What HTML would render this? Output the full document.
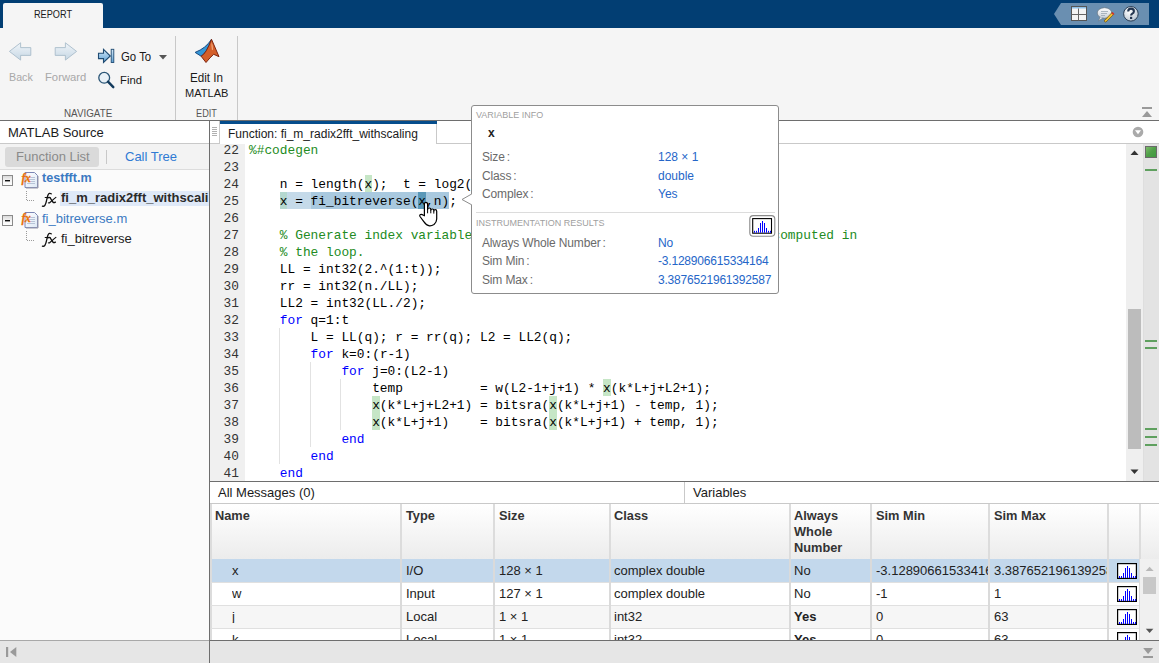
<!DOCTYPE html><html><head><meta charset="utf-8"><style>
*{margin:0;padding:0;box-sizing:border-box}
html,body{width:1159px;height:663px;overflow:hidden;background:#f5f5f5;font-family:"Liberation Sans",sans-serif;color:#222}
.a{position:absolute}
.t{position:absolute;white-space:pre;line-height:1}
.code{position:absolute;font-family:"Liberation Mono",monospace;font-size:12.83px;line-height:17px;white-space:pre;color:#000}
.cm{color:#228b22}
.kw{color:#0000ff}
.ln{position:absolute;font-family:"Liberation Mono",monospace;font-size:12.83px;line-height:17px;white-space:pre;color:#333;text-align:right;width:29px}
</style></head><body>
<div class="a" style="left:0;top:0;width:1159px;height:28px;background:#023e73"></div>
<div class="a" style="left:3px;top:3px;width:100px;height:25px;background:#f5f5f5;border-radius:2px 2px 0 0"></div>
<div class="t" style="left:34px;top:8.7px;font-size:11px;color:#1a1a1a;transform:scaleX(0.833);transform-origin:0 0">REPORT</div>
<svg class="a" style="left:1054px;top:3px" width="95" height="22"><path d="M0 11 L7 0 H95 V22 H7 Z" fill="#6a8fb1"/></svg>
<div class="a" style="left:0;top:120px;width:1159px;height:1px;background:#6e6e6e"></div>
<div class="a" style="left:175px;top:36px;width:1px;height:84px;background:#c8c8c8"></div>
<div class="a" style="left:237px;top:36px;width:1px;height:84px;background:#c8c8c8"></div>
<div class="t" style="left:8.5px;top:72.2px;font-size:11.25px;color:#a8a8a8;transform:scaleX(0.95);transform-origin:0 0">Back</div>
<div class="t" style="left:45px;top:72.2px;font-size:11.25px;color:#a8a8a8;transform:scaleX(1.0);transform-origin:0 0">Forward</div>
<div class="t" style="left:121px;top:50.6px;font-size:12.3px;color:#1a1a1a;transform:scaleX(0.926);transform-origin:0 0">Go To</div>
<div class="t" style="left:120px;top:75px;font-size:11.5px;color:#1a1a1a;transform:scaleX(0.98);transform-origin:0 0">Find</div>
<div class="t" style="left:64px;top:107.9px;font-size:10.7px;color:#555;transform:scaleX(0.92);transform-origin:0 0">NAVIGATE</div>
<div class="t" style="left:190.4px;top:71.8px;font-size:12px;color:#1a1a1a;transform:scaleX(0.97);transform-origin:0 0">Edit In</div>
<div class="t" style="left:185px;top:88px;font-size:11.8px;color:#1a1a1a;transform:scaleX(0.937);transform-origin:0 0">MATLAB</div>
<div class="t" style="left:196px;top:107.9px;font-size:10.7px;color:#555;transform:scaleX(0.86);transform-origin:0 0">EDIT</div>
<svg class="a" style="left:0;top:28px" width="240" height="92" viewBox="0 28 240 92">
<defs>
<linearGradient id="ga" x1="0" y1="0" x2="0" y2="1"><stop offset="0" stop-color="#f0f5f9"/><stop offset="1" stop-color="#c6d7e4"/></linearGradient>
<linearGradient id="gb" x1="0" y1="0" x2="0" y2="1"><stop offset="0" stop-color="#d6ebfa"/><stop offset="1" stop-color="#5d9fd3"/></linearGradient>
</defs>
<path d="M9.4 51.4 L20.6 42.8 V47.6 H30.8 V55.4 H20.6 V60.1 Z" fill="url(#ga)" stroke="#a9bccb" stroke-width="0.9"/>
<path d="M76.6 51.4 L65.4 42.8 V47.6 H55.2 V55.4 H65.4 V60.1 Z" fill="url(#ga)" stroke="#a9bccb" stroke-width="0.9"/>
<path d="M98.5 53.2 H103.5 V49.3 L110.3 56 L103.5 62.5 V58.6 H98.5 Z" fill="url(#gb)" stroke="#1f4b72" stroke-width="1.1" stroke-linejoin="miter"/>
<rect x="111.2" y="49.3" width="2.6" height="13.2" fill="url(#gb)" stroke="#1f4b72" stroke-width="0.9"/>
<path d="M159 55 H167 L163 59.5 Z" fill="#555"/>
<circle cx="104.2" cy="77.8" r="5.4" fill="#e9f1f7" stroke="#2a5576" stroke-width="1.3"/>
<path d="M108 81.7 L113.3 87.2" stroke="#123a5c" stroke-width="2.4" stroke-linecap="round"/>
<path d="M195.1 52.4 Q206 48.2 211.5 39.3 Q206.2 53.8 201.1 56.2 Z" fill="#3496d6" stroke="#1a4c84" stroke-width="1" stroke-linejoin="round"/>
<path d="M211.5 39.3 L219 56.7 L213.7 54.3 Q210 57.5 206 62.5 L201.1 56.2 Q206.2 53.8 211.5 39.3 Z" fill="#d45f2a" stroke="#7e2610" stroke-width="1" stroke-linejoin="round"/>
<path d="M211.4 42 Q213.3 45 213.1 49.5 L212 50.3 Q211.2 46 211.4 42 Z" fill="#f2a77a"/>
</svg>
<div class="a" style="left:1142px;top:107px;width:10px;height:2px;background:#9a9a9a"></div>
<svg class="a" style="left:1142px;top:110px" width="11" height="8"><path d="M0 7 L5 1 L10 7 Z" fill="#9a9a9a"/></svg>
<svg class="a" style="left:1060px;top:0" width="99" height="28" viewBox="1060 0 99 28">
<defs><linearGradient id="gq" x1="0" y1="0" x2="0" y2="1"><stop offset="0" stop-color="#ffffff"/><stop offset="1" stop-color="#c8d0d8"/></linearGradient>
<radialGradient id="gh" cx="0.4" cy="0.35" r="0.7"><stop offset="0" stop-color="#ffffff"/><stop offset="1" stop-color="#b8c4d0"/></radialGradient></defs>
<rect x="1071.5" y="6.5" width="15" height="14" fill="#f4f4f4" stroke="#555" stroke-width="1"/>
<rect x="1072" y="7" width="14" height="1.5" fill="#8ec0e8"/>
<path d="M1078.5 8.5 V20.5 M1071.5 14.5 H1086.5" stroke="#666" stroke-width="1"/>
<ellipse cx="1104.5" cy="13" rx="7.3" ry="5.3" fill="url(#gq)" stroke="#6a7a88" stroke-width="0.8"/>
<path d="M1100 17 L1098.5 21 L1103 18" fill="#dde3e8" stroke="#6a7a88" stroke-width="0.7"/>
<path d="M1101 11.5 H1108 M1101 13.5 H1107 M1101 15.5 H1105" stroke="#9aa7b2" stroke-width="0.8"/>
<path d="M1104 21 L1112 12.5 L1113.8 14.3 L1105.8 22.2 Z" fill="#f0c030" stroke="#6b5010" stroke-width="0.7"/>
<path d="M1111.3 13.2 L1112.6 11.9 L1114.4 13.7 L1113.1 15 Z" fill="#d03030"/>
<circle cx="1130.9" cy="13.8" r="7.3" fill="url(#gh)" stroke="#2a3e55" stroke-width="1"/>
<path d="M1128.2 11.6 Q1128.2 8.6 1131 8.6 Q1133.9 8.6 1133.9 11.2 Q1133.9 12.8 1132.3 13.7 Q1131.1 14.4 1131.1 15.6" fill="none" stroke="#23354f" stroke-width="2.1" stroke-linecap="butt"/><rect x="1130" y="16.8" width="2.2" height="2.2" fill="#23354f"/>
</svg>
<div class="a" style="left:0;top:121px;width:209px;height:23px;background:#fff;border-bottom:1px solid #c9c9c9"></div>
<div class="t" style="left:8px;top:126px;font-size:13px;color:#1a1a1a">MATLAB Source</div>
<div class="a" style="left:0;top:144px;width:209px;height:26px;background:#f3f3f3;border-bottom:1px solid #dcdcdc"></div>
<div class="a" style="left:0;top:170px;width:209px;height:470px;background:#fbfbfb"></div>
<div class="a" style="left:5px;top:147px;width:94px;height:20px;background:#dadada;border-radius:3px"></div>
<div class="t" style="left:16px;top:150px;font-size:13px;color:#8a8a8a">Function List</div>
<div class="a" style="left:106px;top:150px;width:1px;height:14px;background:#c8c8c8"></div>
<div class="t" style="left:125px;top:150px;font-size:13px;color:#2f7ad3">Call Tree</div>
<svg class="a" style="left:0;top:170px" width="209" height="80" viewBox="0 170 209 80">
<defs>
<linearGradient id="gm" x1="0" y1="0" x2="0" y2="1"><stop offset="0" stop-color="#d8d8d8"/><stop offset="0.5" stop-color="#f4f4f4"/><stop offset="1" stop-color="#ffffff"/></linearGradient>
<linearGradient id="gd" x1="0" y1="0" x2="1" y2="1"><stop offset="0" stop-color="#ffffff"/><stop offset="1" stop-color="#dde8f5"/></linearGradient>
</defs>
<g>
<rect x="2.5" y="175.5" width="10" height="10" fill="url(#gm)" stroke="#8a8a8a" stroke-width="1"/>
<rect x="5" y="180" width="5" height="1.4" fill="#111"/>
<path d="M25 172.5 H34.5 L37.5 175.5 V187.5 H25 Z" fill="url(#gd)" stroke="#7b86b4" stroke-width="1"/>
<path d="M26 188 H38 V176" fill="none" stroke="#9a9aaa" stroke-width="1"/>
<path d="M28 177.5 H35 M29 179.5 H35 M29 181.5 H35 M27 183.5 H35" stroke="#a0b0c8" stroke-width="0.7"/>
<text x="21.5" y="181.5" font-family="Liberation Serif" font-style="italic" font-weight="bold" font-size="11.5" fill="#e8700a" stroke="#e8700a" stroke-width="0.3" letter-spacing="-0.3">fx</text>
</g>
<g transform="translate(0,40)">
<rect x="2.5" y="175.5" width="10" height="10" fill="url(#gm)" stroke="#8a8a8a" stroke-width="1"/>
<rect x="5" y="180" width="5" height="1.4" fill="#111"/>
<path d="M25 172.5 H34.5 L37.5 175.5 V187.5 H25 Z" fill="url(#gd)" stroke="#7b86b4" stroke-width="1"/>
<path d="M26 188 H38 V176" fill="none" stroke="#9a9aaa" stroke-width="1"/>
<path d="M28 177.5 H35 M29 179.5 H35 M29 181.5 H35 M27 183.5 H35" stroke="#a0b0c8" stroke-width="0.7"/>
<text x="21.5" y="181.5" font-family="Liberation Serif" font-style="italic" font-weight="bold" font-size="11.5" fill="#e8700a" stroke="#e8700a" stroke-width="0.3" letter-spacing="-0.3">fx</text>
</g>
<path d="M26.5 191 V200.5 H35" fill="none" stroke="#9a9a9a" stroke-width="1" stroke-dasharray="1 1"/>
<path d="M26.5 231 V240.5 H35" fill="none" stroke="#9a9a9a" stroke-width="1" stroke-dasharray="1 1"/>
</svg>
<div class="a" style="left:60px;top:191px;width:149px;height:15px;background:#dfe9f8"></div>
<svg class="a" style="left:40px;top:191px" width="18" height="16" viewBox="40 191 18 16"><g fill="none" stroke="#111" stroke-linecap="round"><path d="M51.2 193.8 Q49.4 192.4 48.1 194.8 Q47.3 196.8 46.7 199.8 Q45.9 203.8 44.9 205.3 Q44 206.6 42.4 206.1" stroke-width="1.3"/><path d="M45.2 197.5 H50.2" stroke-width="1.1"/><path d="M47.9 197.9 Q49.4 196.6 50.5 198.4 L52.9 202 Q53.7 203.1 55.4 202.1" stroke-width="1.35"/><path d="M55.9 197.3 L54.6 198.4 L49.9 202.5 Q49.1 203.3 48.4 202.8" stroke-width="1.1"/></g></svg>
<svg class="a" style="left:40px;top:231px" width="18" height="16" viewBox="40 191 18 16"><g fill="none" stroke="#111" stroke-linecap="round"><path d="M51.2 193.8 Q49.4 192.4 48.1 194.8 Q47.3 196.8 46.7 199.8 Q45.9 203.8 44.9 205.3 Q44 206.6 42.4 206.1" stroke-width="1.3"/><path d="M45.2 197.5 H50.2" stroke-width="1.1"/><path d="M47.9 197.9 Q49.4 196.6 50.5 198.4 L52.9 202 Q53.7 203.1 55.4 202.1" stroke-width="1.35"/><path d="M55.9 197.3 L54.6 198.4 L49.9 202.5 Q49.1 203.3 48.4 202.8" stroke-width="1.1"/></g></svg>
<div class="t" style="left:42px;top:172px;font-size:12.6px;font-weight:bold;color:#3b7ac2">testfft.m</div>
<div class="t" style="left:61px;top:191px;font-size:13px;font-weight:bold;color:#2a2a2a;width:148px;overflow:hidden">fi_m_radix2fft_withscali</div>
<div class="t" style="left:42px;top:212px;font-size:13px;color:#3b7ac2">fi_bitreverse.m</div>
<div class="t" style="left:61px;top:232px;font-size:13px;color:#222">fi_bitreverse</div>
<div class="a" style="left:209px;top:121px;width:1px;height:519px;background:#6e6e6e"></div>
<div class="a" style="left:210px;top:121px;width:949px;height:23px;background:#fff;border-bottom:1px solid #c9c9c9"></div>
<div class="a" style="left:210px;top:121px;width:10px;height:23px;background:#fff;border-right:1px solid #c9c9c9;border-bottom:1px solid #c9c9c9"></div>
<div class="a" style="left:220px;top:121px;width:217px;height:23px;background:#fff;border-right:1px solid #c9c9c9"></div>
<div class="a" style="left:220px;top:121px;width:217px;height:3px;background:#054d8c"></div>
<div class="t" style="left:228px;top:128px;font-size:12px;color:#1a1a1a">Function: fi_m_radix2fft_withscaling</div>
<svg class="a" style="left:212px;top:127px" width="5" height="10"><path d="M0 0.5H5M0 2.5H5M0 4.5H5M0 6.5H5M0 8.5H5" stroke="#b0b0b0" stroke-width="1"/></svg>
<svg class="a" style="left:1132px;top:126px" width="12" height="12"><circle cx="6" cy="6" r="5.3" fill="#aaaaaa"/><path d="M3 4.2 H9 L6 8.3 Z" fill="#fff"/></svg>
<div class="a" style="left:210px;top:144px;width:916px;height:337px;background:#fff;overflow:hidden" id="code">
<div class="a" style="left:0;top:0;width:35px;height:337px;background:#f0f0f0"></div>
<div class="a" style="left:154.50px;top:31px;width:7.70px;height:17px;background:#c6e6c6"></div>
<div class="a" style="left:69.80px;top:48px;width:30.80px;height:17px;background:#c5dae9"></div>
<div class="a" style="left:100.60px;top:48px;width:138.60px;height:17px;background:#a9c9df"></div>
<div class="a" style="left:69.80px;top:48px;width:7.70px;height:17px;background:#b5d8cf"></div>
<div class="a" style="left:208.40px;top:48px;width:7.70px;height:17px;background:#5a98b8"></div>
<div class="a" style="left:393.20px;top:235px;width:7.70px;height:17px;background:#c6e6c6"></div>
<div class="a" style="left:162.20px;top:252px;width:7.70px;height:17px;background:#c6e6c6"></div>
<div class="a" style="left:339.30px;top:252px;width:7.70px;height:17px;background:#c6e6c6"></div>
<div class="a" style="left:162.20px;top:269px;width:7.70px;height:17px;background:#c6e6c6"></div>
<div class="a" style="left:339.30px;top:269px;width:7.70px;height:17px;background:#c6e6c6"></div>
<div class="a" style="left:69px;top:184px;width:1px;height:136px;background:#e2e2e2"></div>
<div class="a" style="left:100px;top:218px;width:1px;height:85px;background:#e2e2e2"></div>
<div class="a" style="left:130px;top:235px;width:1px;height:51px;background:#e2e2e2"></div>
<div class="ln" style="left:0;top:-2px">22</div>
<div class="code" style="left:39px;top:-2px"><span class="cm">%#codegen</span></div>
<div class="ln" style="left:0;top:15px">23</div>
<div class="ln" style="left:0;top:32px">24</div>
<div class="code" style="left:39px;top:32px">    n = length(x);  t = log2(n);</div>
<div class="ln" style="left:0;top:49px">25</div>
<div class="code" style="left:39px;top:49px">    x = fi_bitreverse(x,n);</div>
<div class="ln" style="left:0;top:66px">26</div>
<div class="ln" style="left:0;top:83px">27</div>
<div class="code" style="left:39px;top:83px"><span class="cm">    % Generate index variables as integer constants so they are not computed in</span></div>
<div class="ln" style="left:0;top:100px">28</div>
<div class="code" style="left:39px;top:100px"><span class="cm">    % the loop.</span></div>
<div class="ln" style="left:0;top:117px">29</div>
<div class="code" style="left:39px;top:117px">    LL = int32(2.^(1:t));</div>
<div class="ln" style="left:0;top:134px">30</div>
<div class="code" style="left:39px;top:134px">    rr = int32(n./LL);</div>
<div class="ln" style="left:0;top:151px">31</div>
<div class="code" style="left:39px;top:151px">    LL2 = int32(LL./2);</div>
<div class="ln" style="left:0;top:168px">32</div>
<div class="code" style="left:39px;top:168px">    <span class="kw">for</span> q=1:t</div>
<div class="ln" style="left:0;top:185px">33</div>
<div class="code" style="left:39px;top:185px">        L = LL(q); r = rr(q); L2 = LL2(q);</div>
<div class="ln" style="left:0;top:202px">34</div>
<div class="code" style="left:39px;top:202px">        <span class="kw">for</span> k=0:(r-1)</div>
<div class="ln" style="left:0;top:219px">35</div>
<div class="code" style="left:39px;top:219px">            <span class="kw">for</span> j=0:(L2-1)</div>
<div class="ln" style="left:0;top:236px">36</div>
<div class="code" style="left:39px;top:236px">                temp          = w(L2-1+j+1) * x(k*L+j+L2+1);</div>
<div class="ln" style="left:0;top:253px">37</div>
<div class="code" style="left:39px;top:253px">                x(k*L+j+L2+1) = bitsra(x(k*L+j+1) - temp, 1);</div>
<div class="ln" style="left:0;top:270px">38</div>
<div class="code" style="left:39px;top:270px">                x(k*L+j+1)    = bitsra(x(k*L+j+1) + temp, 1);</div>
<div class="ln" style="left:0;top:287px">39</div>
<div class="code" style="left:39px;top:287px">            <span class="kw">end</span></div>
<div class="ln" style="left:0;top:304px">40</div>
<div class="code" style="left:39px;top:304px">        <span class="kw">end</span></div>
<div class="ln" style="left:0;top:321px">41</div>
<div class="code" style="left:39px;top:321px">    <span class="kw">end</span></div>
</div>
<div class="a" style="left:1126px;top:144px;width:17px;height:337px;background:#efefef"></div>
<div class="a" style="left:1143px;top:144px;width:16px;height:337px;background:#e3e3e3;border-left:1px solid #dedede"></div>
<div class="a" style="left:1128px;top:309px;width:13px;height:140px;background:#bcbcbc"></div>
<svg class="a" style="left:1130px;top:150px" width="9" height="6"><path d="M0.5 5 L4.5 0.5 L8.5 5Z" fill="#333"/></svg>
<svg class="a" style="left:1130px;top:469px" width="9" height="6"><path d="M0.5 0.5 L4.5 5 L8.5 0.5Z" fill="#333"/></svg>
<div class="a" style="left:1145px;top:146px;width:12px;height:12px;background:linear-gradient(135deg,#7cbc6a,#4f9f48 50%,#3f9a3f);border:1px solid #6a6a6a"></div>
<div class="a" style="left:1145px;top:169px;width:12px;height:2px;background:#5fa05f"></div>
<div class="a" style="left:1145px;top:340px;width:12px;height:2px;background:#5fa05f"></div>
<div class="a" style="left:1145px;top:347px;width:12px;height:2px;background:#5fa05f"></div>
<div class="a" style="left:1145px;top:428px;width:12px;height:2px;background:#5fa05f"></div>
<div class="a" style="left:1145px;top:436px;width:12px;height:2px;background:#5fa05f"></div>
<div class="a" style="left:1145px;top:444px;width:12px;height:2px;background:#5fa05f"></div>
<div class="a" style="left:210px;top:481px;width:949px;height:1px;background:#6e6e6e"></div>
<div class="a" style="left:210px;top:482px;width:949px;height:22px;background:#fff;border-bottom:1px solid #c9c9c9"></div>
<div class="a" style="left:684px;top:482px;width:1px;height:21px;background:#c9c9c9"></div>
<div class="t" style="left:218px;top:486px;font-size:13px;color:#1a1a1a">All Messages (0)</div>
<div class="t" style="left:693px;top:486px;font-size:13px;color:#1a1a1a">Variables</div>
<div class="a" style="left:210px;top:504px;width:949px;height:136px;background:#fff;overflow:hidden">
<div class="a" style="left:1px;top:0;width:948px;height:55px;background:linear-gradient(#ffffff,#ececec)"></div>
<div class="a" style="left:0;top:0;width:2px;height:136px;background:#dcdcdc"></div>
<div class="a" style="left:2px;top:55px;width:928px;height:23px;background:#c3d8ec"></div>
<div class="a" style="left:2px;top:78px;width:928px;height:23px;background:#ffffff"></div>
<div class="a" style="left:2px;top:101px;width:928px;height:23px;background:#f6f6f6"></div>
<div class="a" style="left:2px;top:124px;width:928px;height:23px;background:#ffffff"></div>
<div class="a" style="left:1px;top:78px;width:929px;height:1px;background:#e0e0e0"></div>
<div class="a" style="left:1px;top:101px;width:929px;height:1px;background:#e0e0e0"></div>
<div class="a" style="left:1px;top:124px;width:929px;height:1px;background:#e0e0e0"></div>
<div class="a" style="left:1px;top:147px;width:929px;height:1px;background:#e0e0e0"></div>
<div class="a" style="left:190px;top:0;width:2px;height:55px;background:#dcdcdc"></div>
<div class="a" style="left:190px;top:55px;width:2px;height:81px;background:#dadada"></div>
<div class="a" style="left:283px;top:0;width:2px;height:55px;background:#dcdcdc"></div>
<div class="a" style="left:283px;top:55px;width:2px;height:81px;background:#dadada"></div>
<div class="a" style="left:399px;top:0;width:2px;height:55px;background:#dcdcdc"></div>
<div class="a" style="left:399px;top:55px;width:2px;height:81px;background:#dadada"></div>
<div class="a" style="left:579px;top:0;width:2px;height:55px;background:#dcdcdc"></div>
<div class="a" style="left:579px;top:55px;width:2px;height:81px;background:#dadada"></div>
<div class="a" style="left:660px;top:0;width:2px;height:55px;background:#dcdcdc"></div>
<div class="a" style="left:660px;top:55px;width:2px;height:81px;background:#dadada"></div>
<div class="a" style="left:778px;top:0;width:2px;height:55px;background:#dcdcdc"></div>
<div class="a" style="left:778px;top:55px;width:2px;height:81px;background:#dadada"></div>
<div class="a" style="left:897px;top:0;width:2px;height:55px;background:#dcdcdc"></div>
<div class="a" style="left:897px;top:55px;width:2px;height:81px;background:#dadada"></div>
<div class="a" style="left:929px;top:0;width:2px;height:55px;background:#dcdcdc"></div>
<div class="a" style="left:929px;top:55px;width:2px;height:81px;background:#dadada"></div>
<svg class="a" style="left:907px;top:59px" width="20" height="16" viewBox="0 0 20 16"><rect x="0.6" y="0.6" width="18.8" height="14.8" fill="#fff" stroke="#000" stroke-width="1.2"/><path d="M2.5 15V13M4.5 15V13M6.5 15V10M8.5 15V5M10.5 15V3M12.5 15V5M14.5 15V10M16.5 15V13M18.5 15V13" stroke="#0000ff" stroke-width="1"/></svg>
<svg class="a" style="left:907px;top:82px" width="20" height="16" viewBox="0 0 20 16"><rect x="0.6" y="0.6" width="18.8" height="14.8" fill="#fff" stroke="#000" stroke-width="1.2"/><path d="M2.5 15V13M4.5 15V13M6.5 15V10M8.5 15V5M10.5 15V3M12.5 15V5M14.5 15V10M16.5 15V13M18.5 15V13" stroke="#0000ff" stroke-width="1"/></svg>
<svg class="a" style="left:907px;top:105px" width="20" height="16" viewBox="0 0 20 16"><rect x="0.6" y="0.6" width="18.8" height="14.8" fill="#fff" stroke="#000" stroke-width="1.2"/><path d="M2.5 15V13M4.5 15V13M6.5 15V10M8.5 15V5M10.5 15V3M12.5 15V5M14.5 15V10M16.5 15V13M18.5 15V13" stroke="#0000ff" stroke-width="1"/></svg>
<svg class="a" style="left:907px;top:128px" width="20" height="16" viewBox="0 0 20 16"><rect x="0.6" y="0.6" width="18.8" height="14.8" fill="#fff" stroke="#000" stroke-width="1.2"/><path d="M2.5 15V13M4.5 15V13M6.5 15V10M8.5 15V5M10.5 15V3M12.5 15V5M14.5 15V10M16.5 15V13M18.5 15V13" stroke="#0000ff" stroke-width="1"/></svg>
<div class="t" style="left:5px;top:4px;font-size:12.8px;font-weight:bold;color:#333;line-height:16px">Name</div>
<div class="t" style="left:196px;top:4px;font-size:12.8px;font-weight:bold;color:#333;line-height:16px">Type</div>
<div class="t" style="left:289px;top:4px;font-size:12.8px;font-weight:bold;color:#333;line-height:16px">Size</div>
<div class="t" style="left:404px;top:4px;font-size:12.8px;font-weight:bold;color:#333;line-height:16px">Class</div>
<div class="t" style="left:584px;top:4px;font-size:12.8px;font-weight:bold;color:#333;line-height:16px">Always
Whole
Number</div>
<div class="t" style="left:666px;top:4px;font-size:12.8px;font-weight:bold;color:#333;line-height:16px">Sim Min</div>
<div class="t" style="left:784px;top:4px;font-size:12.8px;font-weight:bold;color:#333;line-height:16px">Sim Max</div>
<div class="t" style="left:22px;top:60px;font-size:13px;color:#222;font-weight:normal;overflow:hidden;width:168px">x</div>
<div class="t" style="left:196px;top:60px;font-size:13px;color:#222;font-weight:normal;overflow:hidden;width:87px">I/O</div>
<div class="t" style="left:289px;top:60px;font-size:13px;color:#222;font-weight:normal;overflow:hidden;width:110px">128 × 1</div>
<div class="t" style="left:404px;top:60px;font-size:13px;color:#222;font-weight:normal;overflow:hidden;width:175px">complex double</div>
<div class="t" style="left:584px;top:60px;font-size:13px;color:#222;font-weight:normal;overflow:hidden;width:76px">No</div>
<div class="t" style="left:666px;top:60px;font-size:13px;color:#222;font-weight:normal;overflow:hidden;width:112px">-3.128906615334164</div>
<div class="t" style="left:784px;top:60px;font-size:13px;color:#222;font-weight:normal;overflow:hidden;width:113px">3.3876521961392587</div>
<div class="t" style="left:22px;top:83px;font-size:13px;color:#222;font-weight:normal;overflow:hidden;width:168px">w</div>
<div class="t" style="left:196px;top:83px;font-size:13px;color:#222;font-weight:normal;overflow:hidden;width:87px">Input</div>
<div class="t" style="left:289px;top:83px;font-size:13px;color:#222;font-weight:normal;overflow:hidden;width:110px">127 × 1</div>
<div class="t" style="left:404px;top:83px;font-size:13px;color:#222;font-weight:normal;overflow:hidden;width:175px">complex double</div>
<div class="t" style="left:584px;top:83px;font-size:13px;color:#222;font-weight:normal;overflow:hidden;width:76px">No</div>
<div class="t" style="left:666px;top:83px;font-size:13px;color:#222;font-weight:normal;overflow:hidden;width:112px">-1</div>
<div class="t" style="left:784px;top:83px;font-size:13px;color:#222;font-weight:normal;overflow:hidden;width:113px">1</div>
<div class="t" style="left:22px;top:106px;font-size:13px;color:#222;font-weight:normal;overflow:hidden;width:168px">j</div>
<div class="t" style="left:196px;top:106px;font-size:13px;color:#222;font-weight:normal;overflow:hidden;width:87px">Local</div>
<div class="t" style="left:289px;top:106px;font-size:13px;color:#222;font-weight:normal;overflow:hidden;width:110px">1 × 1</div>
<div class="t" style="left:404px;top:106px;font-size:13px;color:#222;font-weight:normal;overflow:hidden;width:175px">int32</div>
<div class="t" style="left:584px;top:106px;font-size:13px;color:#222;font-weight:bold;overflow:hidden;width:76px">Yes</div>
<div class="t" style="left:666px;top:106px;font-size:13px;color:#222;font-weight:normal;overflow:hidden;width:112px">0</div>
<div class="t" style="left:784px;top:106px;font-size:13px;color:#222;font-weight:normal;overflow:hidden;width:113px">63</div>
<div class="t" style="left:22px;top:129px;font-size:13px;color:#222;font-weight:normal;overflow:hidden;width:168px">k</div>
<div class="t" style="left:196px;top:129px;font-size:13px;color:#222;font-weight:normal;overflow:hidden;width:87px">Local</div>
<div class="t" style="left:289px;top:129px;font-size:13px;color:#222;font-weight:normal;overflow:hidden;width:110px">1 × 1</div>
<div class="t" style="left:404px;top:129px;font-size:13px;color:#222;font-weight:normal;overflow:hidden;width:175px">int32</div>
<div class="t" style="left:584px;top:129px;font-size:13px;color:#222;font-weight:bold;overflow:hidden;width:76px">Yes</div>
<div class="t" style="left:666px;top:129px;font-size:13px;color:#222;font-weight:normal;overflow:hidden;width:112px">0</div>
<div class="t" style="left:784px;top:129px;font-size:13px;color:#222;font-weight:normal;overflow:hidden;width:113px">63</div>
</div>
<div class="a" style="left:1140px;top:559px;width:19px;height:81px;background:#f0f0f0"></div>
<div class="a" style="left:0;top:640px;width:1159px;height:23px;background:#e6e6e6;border-top:1px solid #a8a8a8"></div>
<div class="a" style="left:210px;top:640px;width:949px;height:1px;background:#6e6e6e"></div>
<div class="a" style="left:209px;top:640px;width:1px;height:23px;background:#6e6e6e"></div>
<svg class="a" style="left:1145px;top:566px" width="10" height="6"><path d="M0.6 5 L4.6 0.8 L8.6 5Z" fill="#b8b8b8"/></svg>
<div class="a" style="left:1143px;top:577px;width:13px;height:17px;background:#c8c8c8"></div>
<svg class="a" style="left:1145px;top:628px" width="10" height="6"><path d="M0.8 0.8 L4.6 5 L8.4 0.8Z" fill="#555"/></svg>
<svg class="a" style="left:0;top:640px" width="20" height="23"><rect x="6" y="7" width="2.2" height="10" fill="#9a9a9a"/><path d="M10 12 L16.3 7 V17 Z" fill="#9a9a9a"/></svg>
<svg class="a" style="left:1143px;top:648px" width="11" height="11"><path d="M0.2 0 H10 L5.1 6 Z" fill="#9a9a9a"/><rect x="0.2" y="8" width="9.8" height="2" fill="#9a9a9a"/></svg>
<div class="a" style="left:471px;top:105px;width:308px;height:189px;background:#fff;border:1px solid #8c8c8c;border-radius:3px"></div>
<div class="t" style="left:476px;top:111px;font-size:9px;color:#a0a0a0">VARIABLE INFO</div>
<div class="t" style="left:488px;top:127px;font-size:12px;font-weight:bold;color:#222">x</div>
<div class="t" style="left:482px;top:151px;font-size:12px;color:#6a6a6a;letter-spacing:-0.15px">Size<span style="margin-left:2px">:</span></div>
<div class="t" style="left:658px;top:151px;font-size:12px;color:#2566c8">128 × 1</div>
<div class="t" style="left:482px;top:170px;font-size:12px;color:#6a6a6a;letter-spacing:-0.15px">Class<span style="margin-left:2px">:</span></div>
<div class="t" style="left:658px;top:170px;font-size:12px;color:#2566c8">double</div>
<div class="t" style="left:482px;top:188px;font-size:12px;color:#6a6a6a;letter-spacing:-0.15px">Complex<span style="margin-left:2px">:</span></div>
<div class="t" style="left:658px;top:188px;font-size:12px;color:#2566c8">Yes</div>
<div class="a" style="left:476px;top:212px;width:299px;height:1px;background:#dcdcdc"></div>
<div class="t" style="left:476px;top:219px;font-size:9px;color:#a0a0a0">INSTRUMENTATION RESULTS</div>
<div class="t" style="left:482px;top:237px;font-size:12px;color:#6a6a6a;letter-spacing:-0.15px">Always Whole Number<span style="margin-left:2px">:</span></div>
<div class="t" style="left:658px;top:237px;font-size:12px;color:#2566c8;letter-spacing:-0.2px">No</div>
<div class="t" style="left:482px;top:255px;font-size:12px;color:#6a6a6a;letter-spacing:-0.15px">Sim Min<span style="margin-left:2px">:</span></div>
<div class="t" style="left:658px;top:255px;font-size:12px;color:#2566c8;letter-spacing:-0.2px">-3.128906615334164</div>
<div class="t" style="left:482px;top:274px;font-size:12px;color:#6a6a6a;letter-spacing:-0.15px">Sim Max<span style="margin-left:2px">:</span></div>
<div class="t" style="left:658px;top:274px;font-size:12px;color:#2566c8;letter-spacing:-0.2px">3.3876521961392587</div>
<svg class="a" style="left:461px;top:193px" width="12" height="13"><path d="M11 0.8 L1 6.5 L11 12 " fill="#fff" stroke="#8c8c8c" stroke-width="1"/><rect x="10.6" y="1.5" width="2" height="10" fill="#fff"/></svg>
<svg class="a" style="left:749px;top:215px" width="27" height="22" viewBox="749 215 27 22">
<rect x="749.8" y="215.6" width="25" height="20.6" rx="3.5" fill="#fff" stroke="#8a8a8a" stroke-width="1.1"/>
<rect x="752.7" y="218.6" width="18.8" height="14.6" fill="#fff" stroke="#000" stroke-width="1.1"/>
<path d="M754.5 232.7V230.8M756.5 232.7V230.8M758.5 232.7V228M760.5 232.7V223M762.5 232.7V221M764.5 232.7V223M766.5 232.7V228M768.5 232.7V230.8M770.5 232.7V230.8" stroke="#0000ff" stroke-width="1"/>
</svg>
<svg class="a" style="left:418px;top:201px" width="22" height="27"><path d="M6.4 14.8 V3.5 Q6.4 1.3 8 1.3 Q9.6 1.3 9.6 3.5 V8.5 Q9.6 7 11.2 7 Q12.8 7 12.8 8.5 V9.3 Q12.8 8 14.3 8 Q15.8 8 15.8 9.5 V10 Q15.8 8.7 17.2 8.7 Q18.7 8.7 18.7 10.3 V18 Q18.7 21 16 23.5 Q13.5 25 11.5 24.8 Q8.5 24.5 5.6 20.3 L2 15.5 Q1.3 14 2.5 13.5 Q3.7 13 5 14 Z" fill="#fff" stroke="#000" stroke-width="1.2" stroke-linejoin="round"/><path d="M9.6 8.5 V12.3 M12.8 9.3 V12.3 M15.8 10 V12.6" stroke="#000" stroke-width="1"/></svg>
</body></html>
